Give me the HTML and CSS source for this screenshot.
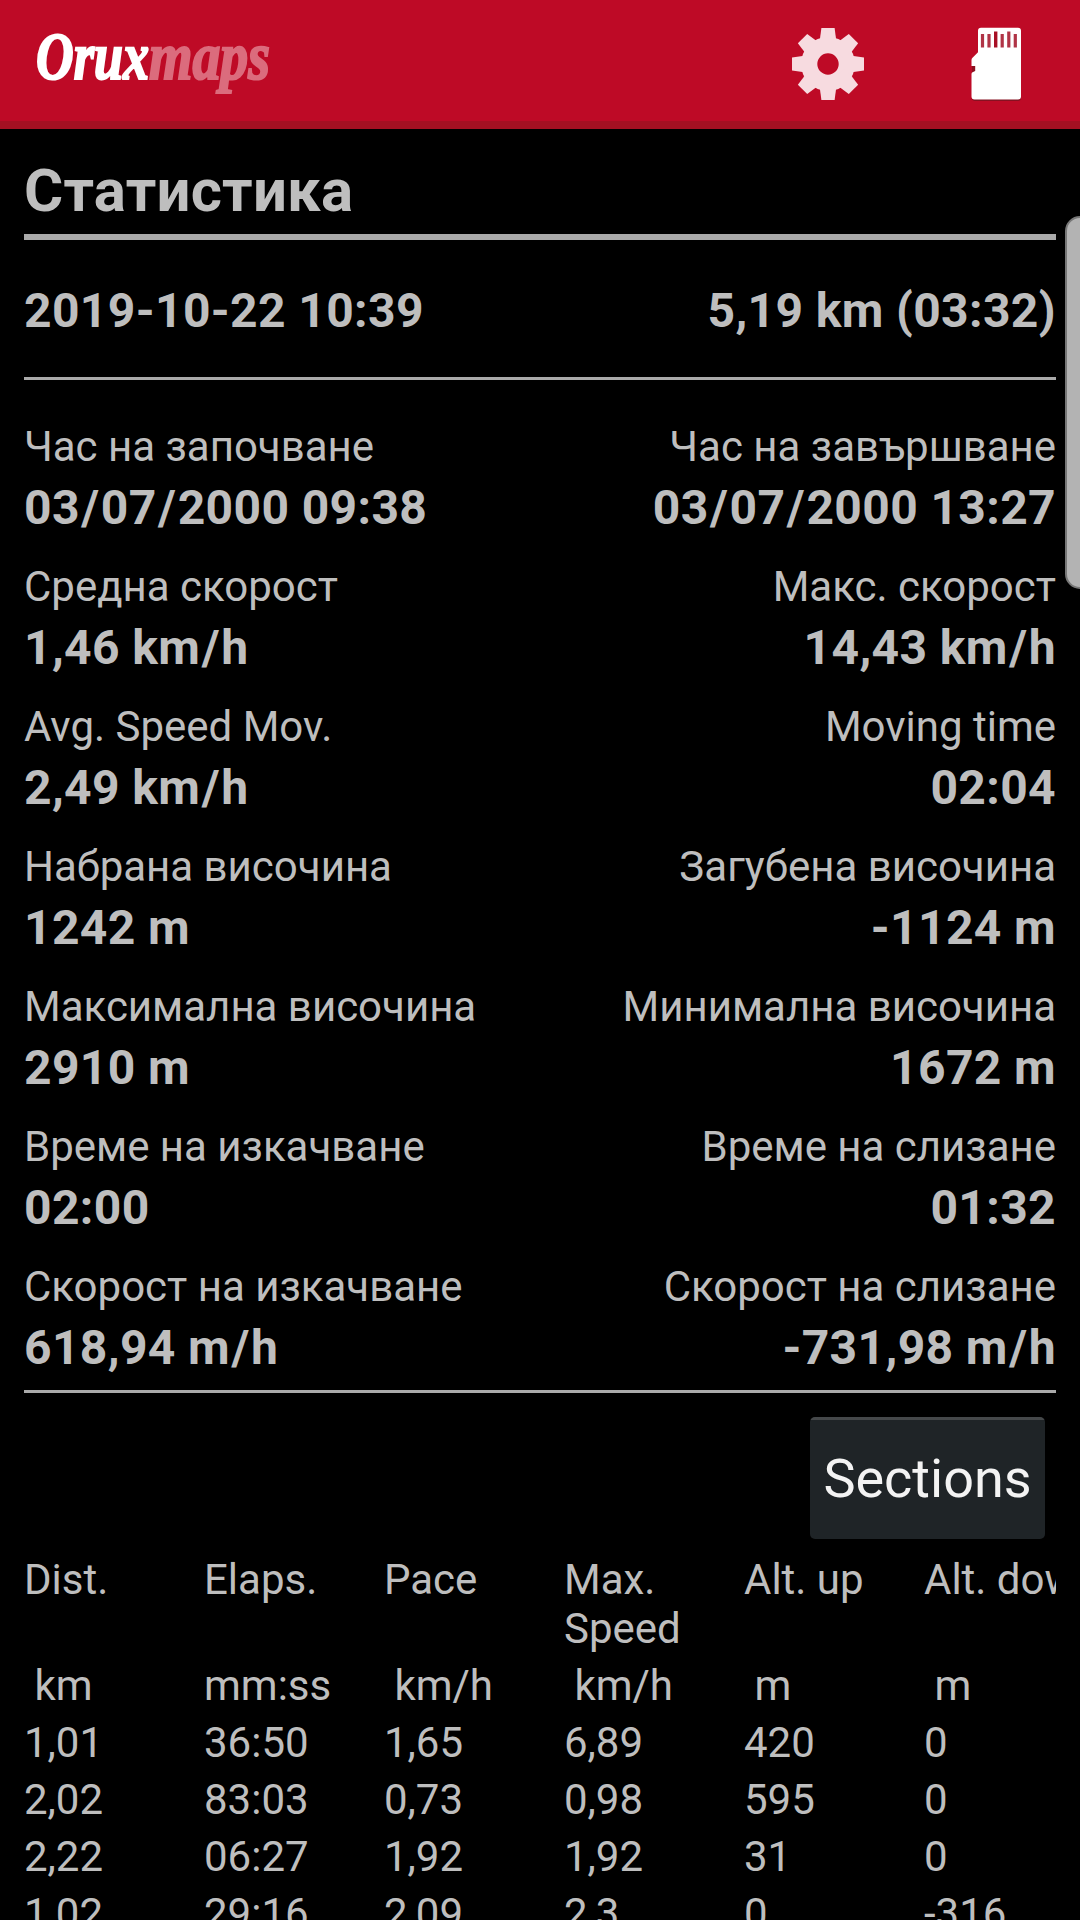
FILE: index.html
```html
<!DOCTYPE html>
<html lang="bg">
<head>
<meta charset="utf-8">
<title>OruxMaps – Статистика</title>
<link rel="stylesheet" href="styles.css">
</head>
<body>
<div class="screen">
  <header class="bar">
    <svg class="logo" width="250" height="80" viewBox="0 0 250 80">
      <text class="logo-text logo-maps" x="125" y="55" textLength="121" lengthAdjust="spacingAndGlyphs">maps</text>
      <text class="logo-text" x="12" y="55" textLength="113" lengthAdjust="spacingAndGlyphs">Orux</text>
    </svg>
    <div class="actions">
      <svg width="72" height="72" viewBox="-36 -36 72 72" fill="#f7dbe0">
        <defs><path id="tooth" d="M-6.6-36H6.6L8-25.500V-15H-8V-25.500Z"/></defs>
        <path fill-rule="evenodd" d="M0-27A27 27 0 1 1 0 27A27 27 0 1 1 0-27ZM0-10.700A10.700 10.700 0 1 0 0 10.700A10.700 10.700 0 1 0 0-10.700Z"/>
        <use href="#tooth"/>
        <use href="#tooth" transform="rotate(45)"/>
        <use href="#tooth" transform="rotate(90)"/>
        <use href="#tooth" transform="rotate(135)"/>
        <use href="#tooth" transform="rotate(180)"/>
        <use href="#tooth" transform="rotate(225)"/>
        <use href="#tooth" transform="rotate(270)"/>
        <use href="#tooth" transform="rotate(315)"/>
      </svg>
      <svg width="50" height="74" viewBox="0 0 50 74">
        <path fill="#8c1020" d="M1 38H6V46H1Z"/>
        <path fill="#6e1420" opacity=".7" d="M1 70H50V71Q50 74 47 74H4Q1 74 1 71Z"/>
        <path fill="#fff" d="M10 .7H47Q50 .7 50 3.700V69.500Q50 72.500 47 72.500H3.500Q.5 72.500.5 69.500V47Q.5 45.800 1.500 45.300L4.200 44V39H.5V33Q.5 31.700 1.500 30.700L7 25.300V3.700Q7 .7 10 .7Z"/>
        <path stroke="#b03446" stroke-width="3.200" d="M11.500 7V20.500M18 7V20.500M31.200 7V20.500M37.800 4.500V20.500M44.300 7V20.500"/>
        <path stroke="#a80f25" stroke-width="3.400" d="M24.700 4.500V20.500"/>
      </svg>
    </div>
  </header>

  <main class="content">
    <h1 class="title">Статистика</h1>
    <div class="summary value"><span>2019-10-22 10:39</span><span>5,19 km (03:32)</span></div>

    <div class="stats">
      <div class="row">
        <div class="cell"><div class="label">Час на започване</div><div class="value">03<i>/</i>07<i>/</i>2000 09:38</div></div>
        <div class="cell"><div class="label">Час на завършване</div><div class="value">03<i>/</i>07<i>/</i>2000 13:27</div></div>
      </div>
      <div class="row">
        <div class="cell"><div class="label">Средна скорост</div><div class="value">1,46 km<i>/</i>h</div></div>
        <div class="cell"><div class="label">Макс. скорост</div><div class="value">14,43 km<i>/</i>h</div></div>
      </div>
      <div class="row">
        <div class="cell"><div class="label">Avg. Speed Mov.</div><div class="value">2,49 km<i>/</i>h</div></div>
        <div class="cell"><div class="label">Moving time</div><div class="value">02:04</div></div>
      </div>
      <div class="row">
        <div class="cell"><div class="label">Набрана височина</div><div class="value">1242 m</div></div>
        <div class="cell"><div class="label">Загубена височина</div><div class="value">-1124 m</div></div>
      </div>
      <div class="row">
        <div class="cell"><div class="label">Максимална височина</div><div class="value">2910 m</div></div>
        <div class="cell"><div class="label">Минимална височина</div><div class="value">1672 m</div></div>
      </div>
      <div class="row">
        <div class="cell"><div class="label">Време на изкачване</div><div class="value">02:00</div></div>
        <div class="cell"><div class="label">Време на слизане</div><div class="value">01:32</div></div>
      </div>
      <div class="row">
        <div class="cell"><div class="label">Скорост на изкачване</div><div class="value">618,94 m<i>/</i>h</div></div>
        <div class="cell"><div class="label">Скорост на слизане</div><div class="value">-731,98 m<i>/</i>h</div></div>
      </div>
    </div>

    <button class="sections">Sections</button>

    <div class="table">
      <div class="line"><span>Dist.</span><span>Elaps.</span><span>Pace</span><span>Max.<br>Speed</span><span>Alt. up</span><span>Alt. down</span></div>
      <div class="line"><span> km</span><span>mm:ss</span><span> km/h</span><span> km/h</span><span> m</span><span> m</span></div>
      <div class="line"><span>1,01</span><span>36:50</span><span>1,65</span><span>6,89</span><span>420</span><span>0</span></div>
      <div class="line"><span>2,02</span><span>83:03</span><span>0,73</span><span>0,98</span><span>595</span><span>0</span></div>
      <div class="line"><span>2,22</span><span>06:27</span><span>1,92</span><span>1,92</span><span>31</span><span>0</span></div>
      <div class="line"><span>1,02</span><span>29:16</span><span>2,09</span><span>2,3</span><span>0</span><span>-316</span></div>
    </div>
  </main>
  <div class="edge-handle"></div>
</div>
</body>
</html>
```
FILE: styles.css
```css
* { box-sizing: border-box; }

body {
  margin: 0;
  background: #000;
  color: #bebebe;
  font-family: Roboto, "Noto Sans", sans-serif;
}

.screen {
  position: relative;
  width: 1080px;
  height: 1920px;
  overflow: hidden;
  background: #000;
}

.bar {
  display: flex;
  justify-content: space-between;
  height: 129px;
  padding: 24px 59px 0 24px;
  background: #be0a26;
  border-bottom: 8px solid #a31022;
}

.logo { overflow: visible; }

.logo-text {
  font: italic bold 67px "Liberation Serif", serif;
  fill: #fff;
  stroke: #fff;
  stroke-width: 2.2px;
}

.logo-maps {
  fill: #db6c7d;
  stroke: #db6c7d;
}

.actions {
  display: flex;
  gap: 107px;
  padding-top: 3px;
}

.actions svg { display: block; }

.actions svg:first-child { margin-top: 1px; }

.content { padding: 27px 24px 0; }

.title {
  margin: 0;
  padding-bottom: 8px;
  border-bottom: 6px solid #aaa;
  font-size: 60px;
  font-weight: 700;
  letter-spacing: .2px;
  line-height: 70px;
}

.value {
  font-size: 48px;
  font-weight: 700;
  font-kerning: none;
  letter-spacing: .38px;
  line-height: 57px;
}

/* Slashes in dates and units get a little air on both sides. */
.value i {
  margin: 0 1.4px;
  font-style: normal;
}

.summary {
  display: flex;
  justify-content: space-between;
  padding: 42px 0 38px;
  border-bottom: 3px solid #aaa;
}

.stats {
  display: flex;
  flex-direction: column;
  gap: 26px;
  padding: 42px 0 14px;
  border-bottom: 3px solid #aaa;
}

.row {
  display: flex;
  justify-content: space-between;
  white-space: nowrap;
}

.cell:last-child { text-align: right; }

.label {
  margin-bottom: 7px;
  font-size: 42px;
  line-height: 50px;
}

.sections {
  display: block;
  width: 235px;
  height: 122px;
  margin: 24px 11px 16px auto;
  padding: 2px 0 0;
  border: 0;
  border-radius: 5px;
  background: linear-gradient(#45484a 3px, #1f2427 3px);
  color: #f3f3f3;
  font: 54px/120px Roboto, sans-serif;
}

.table {
  overflow: hidden;
  font-size: 42px;
  line-height: 49px;
}

.line {
  display: grid;
  grid-template-columns: repeat(6, 180px);
  padding-bottom: 8px;
}

.line span { white-space: pre; }

.edge-handle {
  position: absolute;
  top: 216px;
  left: 1065px;
  width: 30px;
  height: 373px;
  border: 2px solid #777;
  border-radius: 16px;
  background: #b3b3b3;
}
```
